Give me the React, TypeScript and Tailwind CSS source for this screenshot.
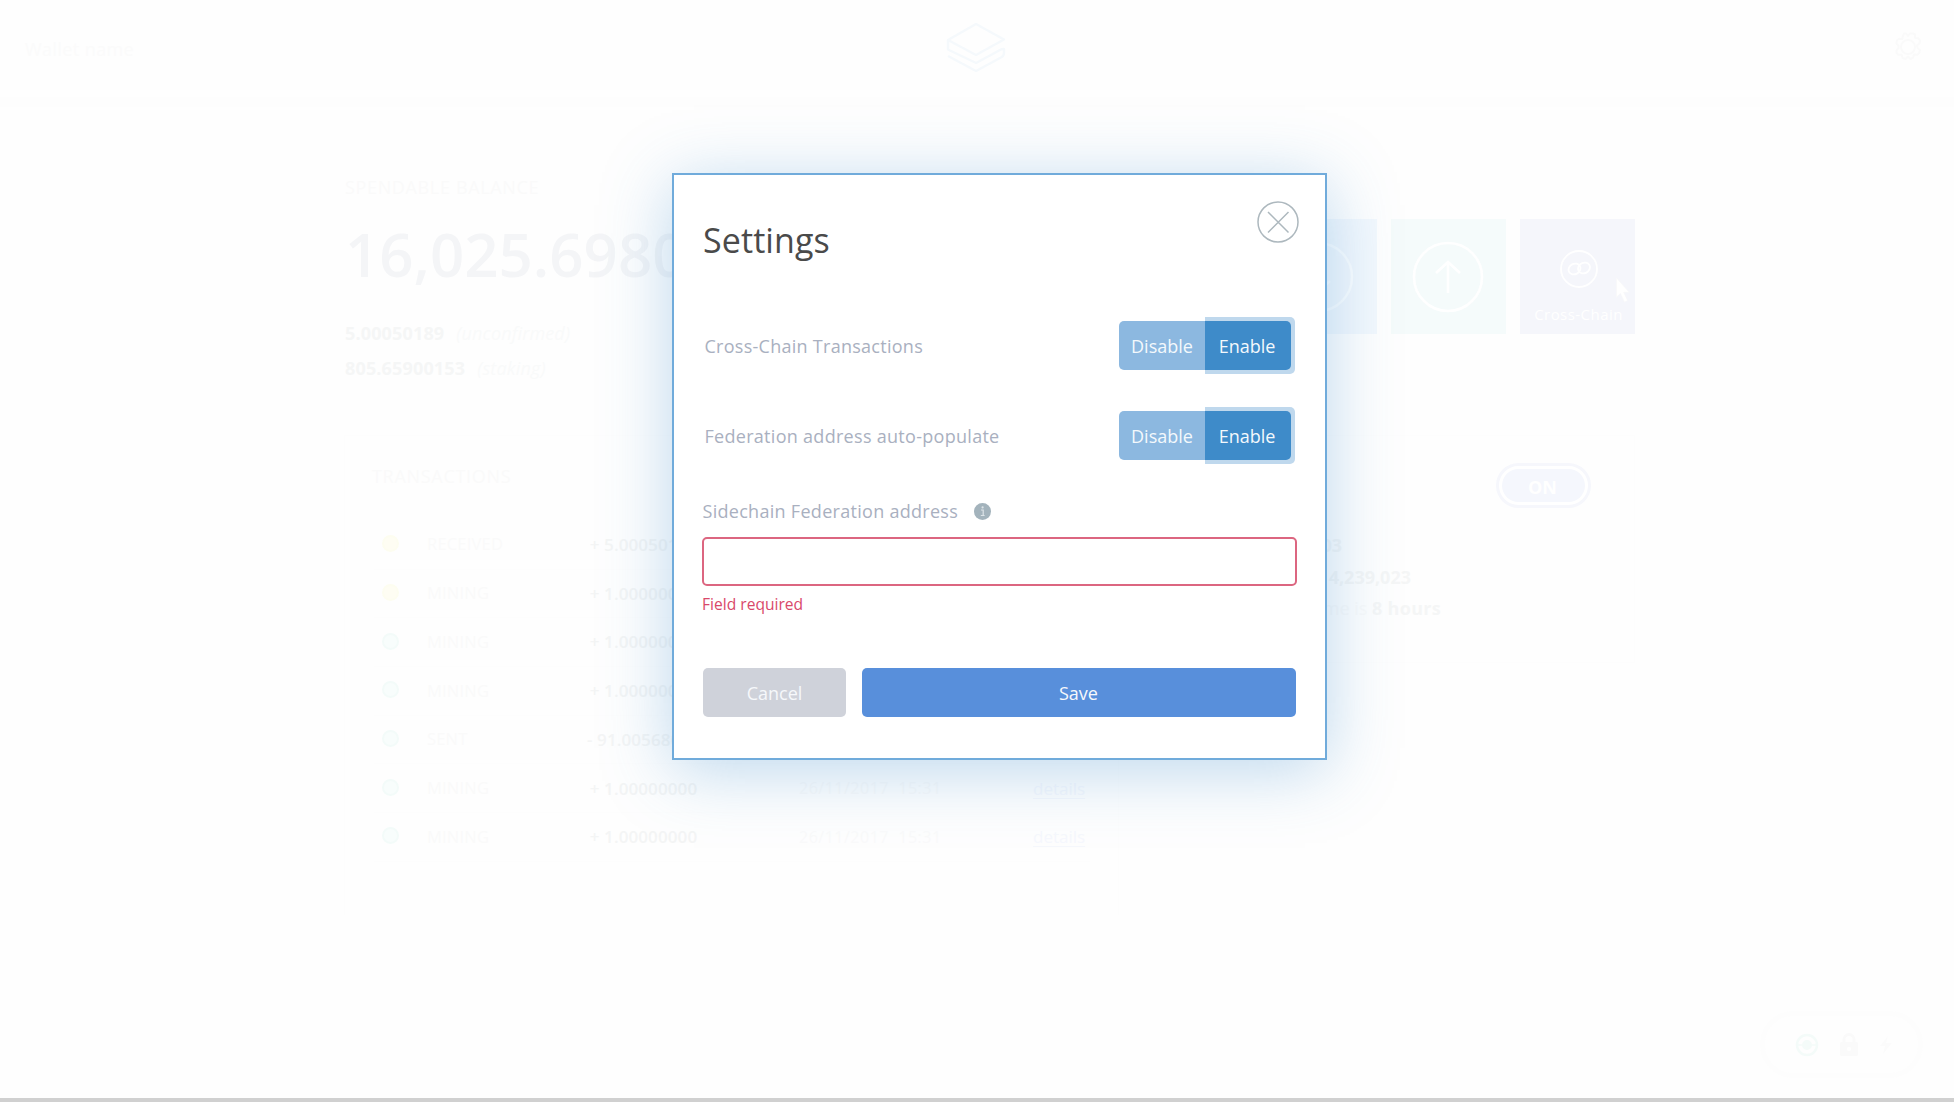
import React from "react";

type Tx = { label: string; amount: string; color: string };

const transactions: Tx[] = [
  { label: "RECEIVED", amount: "+ 5.00050189", color: "border-[#fdfdf0] bg-[#fefdf3]" },
  { label: "MINING", amount: "+ 1.00000000", color: "border-[#fdfdf0] bg-[#fefdf3]" },
  { label: "MINING", amount: "+ 1.00000000", color: "border-[#f3fbf9] bg-[#f8fdfc]" },
  { label: "MINING", amount: "+ 1.00000000", color: "border-[#f3fbf9] bg-[#f8fdfc]" },
  { label: "SENT", amount: "- 91.00568000", color: "border-[#f3fbf9] bg-[#f8fdfc]" },
  { label: "MINING", amount: "+ 1.00000000", color: "border-[#f3fbf9] bg-[#f8fdfc]" },
  { label: "MINING", amount: "+ 1.00000000", color: "border-[#f3fbf9] bg-[#f8fdfc]" },
];

function Header() {
  return (
    <header className="flex h-[107px] items-start justify-between border-b-[10px] border-[#fdfdfd] pl-[25px] pr-[31px]">
      <div className="mt-[36px] w-[300px] text-[18px] leading-[26px] tracking-[0.4px] text-[#fbfbfb]">Wallet name</div>
      <svg className="mt-[22px] ml-[3px]" width="60" height="52" viewBox="0 0 60 52" fill="none" stroke="#f5f9fc" strokeWidth="2.4" strokeLinejoin="round">
        <path d="M2 18 30 2l28 15.500L30 33 2 18v9.500L30 41l25-13.500q3-1 3-.5v4q0 3-3 4.500L30 49 2 34" />
      </svg>
      <div className="flex w-[300px] justify-end">
        <svg className="mt-[32px]" width="30" height="30" viewBox="0 0 30 30" fill="none" stroke="#fafafa" strokeWidth="2" strokeLinejoin="round">
          <circle cx="15" cy="15" r="7" />
          <path d="M11 1.500h2l2 2.500 2-2.500h3l2 1 .2 3.500 3.300.3 1.500 2.500-.5 2.700-2.500 2 .5 2.500 2.500 2-.8 3-2 1.700-3.200-.2-1 3.200-2.500 1.300-2.500-2.500-2.500 2.500-3-1-.8-3.300-3.300.1-2-2.300.3-2.500 2-2-.3-2.500-2-2.200.6-3 2-1.500 3.200.2.800-3.200z" />
        </svg>
      </div>
    </header>
  );
}

function Tiles() {
  return (
    <div className="mt-[44px] flex gap-[14px]">
      <div className="flex size-[115px] items-center justify-center bg-[#f3f8fd]">
        <svg className="-ml-[3px]" width="72" height="72" viewBox="0 0 72 72" fill="none" stroke="#fcfeff" strokeWidth="2.5">
          <circle cx="36" cy="36" r="34" />
          <path d="M36 20v31M24 40l12 11 12-11" />
        </svg>
      </div>
      <div className="flex size-[115px] items-center justify-center bg-[#f5fbfb]">
        <svg className="-ml-[2px]" width="72" height="72" viewBox="0 0 72 72" fill="none" stroke="#ffffff" strokeWidth="2.6">
          <circle cx="36" cy="36" r="34" />
          <path d="M36 52V21M24 32l12-11 12 11" />
        </svg>
      </div>
      <div className="relative flex size-[115px] flex-col items-center bg-[#f5f6fb] pt-[30px]">
        <svg className="ml-[2px]" width="40" height="40" viewBox="0 0 40 40" fill="none" stroke="#ffffff">
          <circle cx="20" cy="20" r="18" strokeWidth="1.800" />
          <ellipse cx="15.500" cy="20" rx="6.200" ry="5.200" transform="rotate(-28 15.500 20)" strokeWidth="1.800" />
          <ellipse cx="25" cy="19" rx="6.200" ry="5.200" transform="rotate(-28 25 19)" strokeWidth="1.800" />
        </svg>
        <div className="mt-[14px] pl-[2px] text-[15px] leading-[22px] tracking-[0.45px] text-white">Cross-Chain</div>
        <svg className="absolute left-[95px] top-[58px]" width="16" height="28" viewBox="0 0 16 28">
          <path d="M1.500 1v19l4-3.500 4 8.500 3-1.500-4-8.300h5.500z" fill="#ffffff" stroke="#f9f9f8" strokeWidth=".6" />
        </svg>
      </div>
    </div>
  );
}

function Transactions() {
  return (
    <section className="h-[480px] w-[775px] border border-b-0 border-[#fdfdfd] pl-[29px] pr-[28px] pt-[28px]">
      <h2 className="-ml-[2px] text-[18px] leading-6 tracking-[0.7px] text-[#fafafa]">TRANSACTIONS</h2>
      <div className="mt-[33px]">
        {transactions.map((t, i) => (
          <div key={i} className="flex h-[48.700px] items-center border-b border-[#fdfdfd] text-[17px] text-[#fafafa]">
            <span className={`-mt-[2px] ml-[8px] size-[17px] rounded-full border-2 ${t.color}`} />
            <span className="ml-[28px] w-[140px] text-[16.500px] tracking-[0.2px]">{t.label}</span>
            <span className="w-[153px] text-center font-semibold tracking-[0.1px] text-[#f4f5f5]">{t.amount}</span>
            <span className="ml-[79px] w-[234px] whitespace-pre text-[16px] tracking-[0.5px]">26/11/2017  15:31</span>
            <span className="text-[17px] text-[#f6f8fd] underline underline-offset-[3px]">details</span>
          </div>
        ))}
      </div>
    </section>
  );
}

function Staking() {
  return (
    <section className="h-[228px] w-[501px] border border-[#fdfdfd] pt-[27px]">
      <div className="flex justify-end pr-[43px]">
        <div className="flex h-[45px] w-[95px] rounded-full border-[3px] border-[#f6f7fc] bg-white p-[3px]">
          <div className="flex flex-1 items-center justify-center rounded-full bg-[#f5f7fd] pr-[2px] pt-[3px] text-[18px] font-bold text-white">ON</div>
        </div>
      </div>
      <div className="mt-[22px] text-right text-[18px] leading-[31.500px] text-[#fafafa]">
        <p className="pr-[292px]">Block height is <b className="font-bold text-[#f5f6f6]">603</b></p>
        <p className="pr-[223px]">Network weight <b className="font-bold text-[#f5f6f6]">4,239,023</b></p>
        <p className="pr-[193px]">Expected time is <b className="font-bold tracking-[0.3px] text-[#f5f6f6]">8 hours</b></p>
      </div>
    </section>
  );
}

function StatusPill() {
  return (
    <div className="absolute bottom-[20px] right-[31px] flex h-[67px] w-[163px] items-center rounded-full border-[5px] border-[#fdfdfd] pl-[30px]">
      <svg width="24" height="24" viewBox="0 0 24 24" fill="none" stroke="#f4fbf9" strokeWidth="2.500">
        <circle cx="12" cy="12" r="10" />
        <circle cx="12" cy="12" r="5" fill="#f4fbf9" stroke="none" />
        <path d="M1 12h6M17 12h6" strokeWidth="1.500" />
      </svg>
      <svg className="ml-[21px]" width="18" height="24" viewBox="0 0 18 24">
        <path d="M4 11V6.500a5 5 0 0 1 10 0V11" fill="none" stroke="#fafafa" strokeWidth="3" />
        <rect y="9" width="18" height="14" rx="2" fill="#fafafa" />
        <circle cx="9" cy="16" r="2" fill="#fefefe" />
      </svg>
      <svg className="ml-[22px]" width="12" height="22" viewBox="0 0 12 22">
        <path d="M8 2 0 12h5L3 20l9-11H6z" fill="#fbfbfb" />
      </svg>
    </div>
  );
}

function Toggle() {
  return (
    <div className="flex h-[49px] w-[172px] text-[18px] text-[#f3f8fc]">
      <button className="w-[86px] rounded-l-[5px] bg-[#8cb8e0] pt-px">Disable</button>
      <div className="relative w-[86px]">
        <div className="absolute -bottom-[4px] -right-[4px] -top-[4px] left-0 rounded-r-[5px] bg-[#bfd8ed]" />
        <button className="relative h-full w-full rounded-r-[5px] bg-[#3e8bc9] pr-[2px] pt-px">Enable</button>
      </div>
    </div>
  );
}

function SettingsModal() {
  return (
    <div className="relative h-[587px] w-[655px] border-2 border-[#70abdb] bg-white pl-[29px] pr-[29px] shadow-[0_10px_64px_rgba(62,140,204,0.34)]">
      <div className="flex justify-between">
        <h1 className="mt-[42px] text-[34px] leading-[46px] tracking-[0.1px] text-[#4a4a4a]">Settings</h1>
        <svg className="-mr-[3px] mt-[26px]" width="42" height="42" viewBox="0 0 42 42" fill="none" stroke="#adb8be" strokeWidth="1.500">
          <circle cx="21" cy="21" r="20" />
          <path d="m11 11 20.500 20.500M31.500 11 11 31.500" />
        </svg>
      </div>
      <div className="mt-[58px] flex items-center justify-between pl-[1.500px] pr-[5px] text-[18px] text-[#a9b0c0]">
        <span className="pt-px tracking-[0.27px]">Cross-Chain Transactions</span>
        <Toggle />
      </div>
      <div className="mt-[41px] flex items-center justify-between pl-[1.500px] pr-[5px] text-[18px] text-[#a9b0c0]">
        <span className="pt-px tracking-[0.29px]">Federation address auto-populate</span>
        <Toggle />
      </div>
      <div className="mt-[39px] flex items-center text-[18px] leading-6 text-[#a9b0c0]">
        <span className="-ml-[0.500px] tracking-[0.29px]">Sidechain Federation address</span>
        <svg className="ml-[16px]" width="17" height="17" viewBox="0 0 17 17">
          <circle cx="8.500" cy="8.500" r="8.500" fill="#a3b3bc" />
          <path d="M7 7h2.200v5M6.800 12.500h3.800" fill="none" stroke="#dde4e8" strokeWidth="1.200" />
          <circle cx="8.600" cy="4.400" r="1.100" fill="#dde4e8" />
        </svg>
      </div>
      <input className="-ml-px mt-[14px] block h-[49px] w-[595px] rounded-[5px] border-2 border-[#dc6680] bg-white outline-none" />
      <p className="-ml-px mt-[7px] text-[15.600px] leading-[22px] text-[#d9486a]">Field required</p>
      <div className="mt-[53px] flex gap-[16px] text-[18px] text-[#f6f8fb]">
        <button className="h-[49px] w-[143px] rounded-[5px] bg-[#cfd2da] pt-px">Cancel</button>
        <button className="h-[49px] flex-1 rounded-[5px] bg-[#588fdb] pr-px pt-px">Save</button>
      </div>
    </div>
  );
}

export default function App() {
  return (
    <div className="relative h-[1102px] w-[1954px] overflow-hidden border-b-4 border-[#d0d0d0] bg-[#fefefe] font-['Open_Sans',sans-serif]">
      <Header />
      <main className="pl-[344px] pr-[319px]">
        <div className="flex h-[328px] justify-between pt-[68px]">
          <div className="pl-px">
            <div className="text-[18px] leading-6 tracking-[0.65px] text-[#fafafa]">SPENDABLE BALANCE</div>
            <div className="mt-[15px] text-[60px] font-semibold leading-[80px] text-[#f4f5f7]">16,025.69809201</div>
            <div className="mt-[22px] text-[18px] leading-[34.500px] text-[#f9fafa]">
              <p><b className="mr-[12px] font-bold tracking-[0.15px] text-[#f5f6f6]">5.00050189</b><i className="tracking-[0.15px]">(unconfirmed)</i></p>
              <p><b className="mr-[12px] font-bold tracking-[0.15px] text-[#f5f6f6]">805.65900153</b><i className="tracking-[0.15px]">(staking)</i></p>
            </div>
          </div>
          <Tiles />
        </div>
        <div className="flex items-start justify-between">
          <Transactions />
          <Staking />
        </div>
      </main>
      <StatusPill />
      <div className="absolute inset-0 flex items-start justify-center pl-[45px] pt-[173px]">
        <SettingsModal />
      </div>
    </div>
  );
}
